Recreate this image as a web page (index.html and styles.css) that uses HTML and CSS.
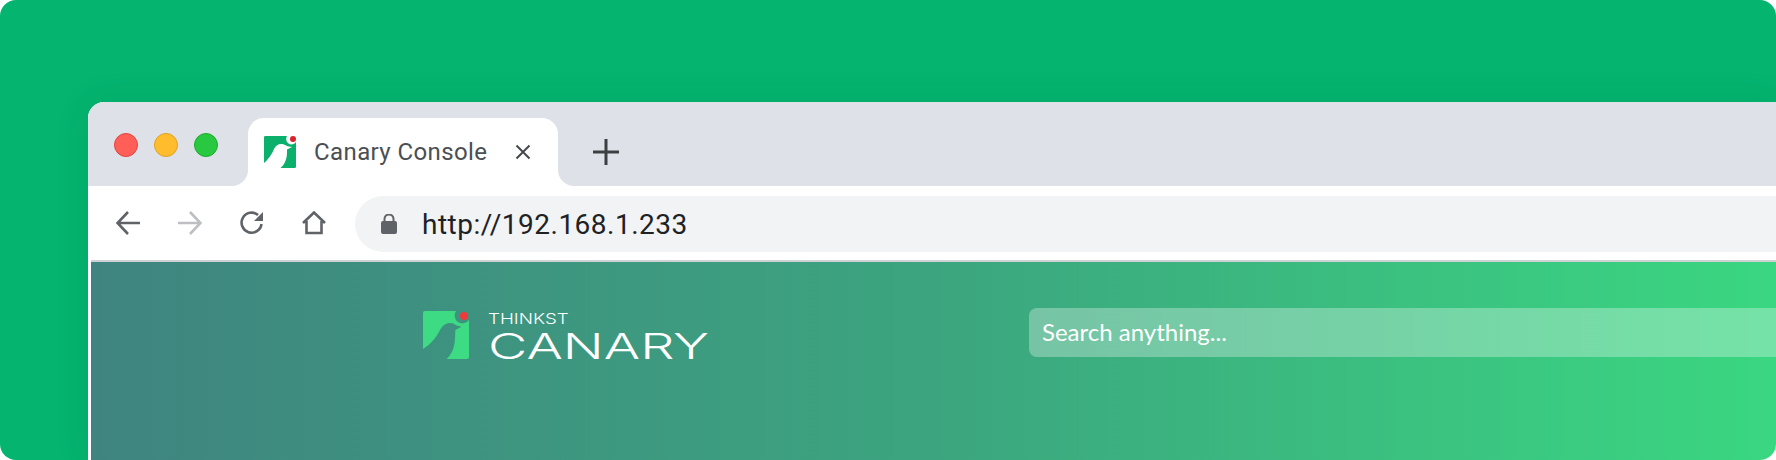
FILE: index.html
```html
<!DOCTYPE html>
<html lang="en">
<head>
    <meta charset="UTF-8">
    <title>Canary Console</title>
    <link rel="stylesheet" href="styles.css">
</head>
<body>
    <div class="scene">
        <div class="window">
            <div class="tabstrip">
                <div class="lights">
                    <span class="light red"></span>
                    <span class="light yellow"></span>
                    <span class="light green"></span>
                </div>
                <div class="tabslot">
                    <div class="tab">
                        <svg class="favicon" viewBox="0 0 32 32">
                            <path class="favicon-bg" d="M1.400 0H23A4.900 4.900 0 0 0 32 6V30.700A1.400 1.300 0 0 1 30.600 32H16.500C18 30.500 20 28.500 21 26C23 22 23 18 23 13.500L28 11L23.500 10.300C22 9.300 20 8.300 18 8C15 7.500 12 9 10 13C8 18 4 24 0 27V1.300A1.400 1.300 0 0 1 1.400 0Z"/>
                            <circle class="favicon-dot" cx="29" cy="3" r="3"/>
                        </svg>
                        <span class="tab-title">Canary Console</span>
                        <svg class="tab-close" viewBox="0 0 16 16"><path d="M1.500 1.500L14.500 14.500M14.500 1.500L1.500 14.500"/></svg>
                    </div>
                </div>
                <div class="strip-rest">
                    <svg class="newtab" viewBox="0 0 26 26"><path d="M13 0V26M0 13H26"/></svg>
                </div>
            </div>
            <div class="toolbar">
                <svg class="navicon" viewBox="0 0 24 24"><path d="M24 12H2M12 1L1.500 12L12 23"/></svg>
                <svg class="navicon off" viewBox="0 0 24 24"><path d="M0 12H22M12 1L22.500 12L12 23"/></svg>
                <svg class="navicon" viewBox="0 0 24 24"><path d="M21.500 13A10 10 0 1 1 18 4"/><path class="fill" d="M23 1V10H14Z"/></svg>
                <svg class="navicon" viewBox="0 0 24 24"><path d="M1 12L12 1.500L23 12M4.500 10V22H19.500V10"/></svg>
                <div class="address">
                    <svg class="lock" viewBox="0 0 16 20"><path class="lock-body" d="M2 7H14A2 2 0 0 1 16 9V18A2 2 0 0 1 14 20H2A2 2 0 0 1 0 18V9A2 2 0 0 1 2 7Z"/><path class="lock-bow" d="M3.500 8V5A4.500 4.500 0 0 1 12.500 5V8"/></svg>
                    <span class="url">http://192.168.1.233</span>
                </div>
            </div>
            <div class="content">
                <div class="logo">
                    <svg class="logo-mark" viewBox="0 0 46 48">
                        <path class="logo-bg" d="M2 0H33A7 7 0 0 0 46 9V46A2 2 0 0 1 44 48H23.500C27 45 30 40 31 35C32.500 29 32 24 32.300 19L38.500 15.700L33.500 14.500C31.500 12.800 29.500 12 27 12C23 12 19.500 14.500 17 19C13 27 7 34 0 38V2A2 2 0 0 1 2 0Z"/>
                        <circle class="logo-dot" cx="41" cy="5" r="4"/>
                    </svg>
                    <div class="wordmark">
                        <span class="thinkst">THINKST</span>
                        <span class="canary">CANARY</span>
                    </div>
                </div>
                <div class="search">Search anything...</div>
            </div>
        </div>
    </div>
</body>
</html>
```

FILE: styles.css
```css
html, body {
    margin: 0;
    background-color: #fff;
}

.scene {
    box-sizing: border-box;
    width: 1776px;
    height: 460px;
    padding: 102px 0 0 88px;
    overflow: hidden;
    border-radius: 16px;
    background-color: #04b46f;
}

.window {
    height: 100%;
    display: flex;
    flex-direction: column;
    overflow: hidden;
    border-radius: 16px 0 0 0;
    background-color: #fff;
    box-shadow: 0 0 36px rgba(0, 60, 30, 0.09);
}

.tabstrip {
    display: flex;
    height: 84px;
    flex-shrink: 0;
}

.lights {
    width: 160px;
    display: flex;
    gap: 16px;
    padding: 31px 0 0 26px;
    box-sizing: border-box;
    background-color: #dee1e8;
    border-radius: 0 0 16px 0;
}

.light {
    width: 24px;
    height: 24px;
    box-sizing: border-box;
    border-radius: 50%;
    border: 1px solid;
}

.red { background-color: #ff5f57; border-color: #e0443e; }
.yellow { background-color: #ffbd2e; border-color: #dea123; }
.green { background-color: #28c840; border-color: #1dad2b; }

.tabslot {
    width: 310px;
    padding-top: 16px;
    box-sizing: border-box;
    background-color: #dee1e8;
}

.tab {
    height: 68px;
    display: flex;
    align-items: flex-start;
    padding: 18px 0 0 16px;
    box-sizing: border-box;
    background-color: #fff;
    border-radius: 16px 16px 0 0;
}

.favicon {
    width: 32px;
    height: 32px;
    flex-shrink: 0;
}

.favicon-bg { fill: #0bb06c; }
.favicon-dot { fill: #d9232e; }

.tab-title {
    margin-left: 18px;
    font-family: Roboto, sans-serif;
    font-size: 24px;
    line-height: 32px;
    letter-spacing: 0.4px;
    color: #4b4e53;
    white-space: nowrap;
}

.tab-close {
    width: 16px;
    height: 16px;
    margin: 8px 0 0 28px;
    fill: none;
    stroke: #45484d;
    stroke-width: 2;
}

.strip-rest {
    flex: 1;
    padding: 37px 0 0 35px;
    box-sizing: border-box;
    background-color: #dee1e8;
    border-radius: 0 0 0 16px;
}

.newtab {
    display: block;
    width: 26px;
    height: 26px;
    fill: none;
    stroke: #3c4043;
    stroke-width: 3;
}

.toolbar {
    height: 74px;
    display: flex;
    align-items: center;
    gap: 38px;
    padding-left: 28px;
    box-sizing: border-box;
    flex-shrink: 0;
}

.navicon {
    width: 24px;
    height: 24px;
    flex-shrink: 0;
    fill: none;
    stroke: #5f6368;
    stroke-width: 2.600;
}

.navicon .fill {
    fill: #5f6368;
    stroke: none;
}

.navicon.off {
    stroke: #bdbfc2;
}

.address {
    flex: 1;
    height: 56px;
    margin: 2px 0 0 -9px;
    display: flex;
    align-items: center;
    padding-left: 26px;
    border-radius: 28px 0 0 28px;
    background-color: #f1f3f4;
}

.lock {
    width: 16px;
    height: 20px;
}

.lock-body { fill: #5f6368; }

.lock-bow {
    fill: none;
    stroke: #5f6368;
    stroke-width: 2;
}

.url {
    margin-left: 25px;
    font-family: Roboto, sans-serif;
    font-size: 28px;
    letter-spacing: 0.5px;
    color: #202124;
}

.content {
    flex: 1;
    margin-left: 3px;
    padding-top: 46px;
    display: flex;
    align-items: flex-start;
    border-top: 2px solid #cfd2d4;
    border-radius: 0 0 16px 0;
    background: linear-gradient(90deg, #3f8480 0%, #3ca57f 50%, #3ad781 100%);
    overflow: hidden;
}

.logo {
    display: flex;
    margin: 3px 0 0 332px;
    width: 606px;
    flex-shrink: 0;
    gap: 19px;
}

.logo-mark {
    width: 46px;
    height: 48px;
    flex-shrink: 0;
}

.logo-bg { fill: #3ddc84; }
.logo-dot { fill: #ef3b3b; }

.wordmark {
    display: flex;
    flex-direction: column;
    color: #fff;
    font-family: Inter, sans-serif;
}

.thinkst {
    font-size: 15px;
    line-height: 15px;
    font-weight: 300;
    transform: scaleX(1.25);
    transform-origin: left;
}

.canary {
    margin-top: 2px;
    font-size: 36px;
    line-height: 36px;
    font-weight: 300;
    transform: scaleX(1.5);
    transform-origin: left;
}

.search {
    flex: 1;
    height: 49px;
    padding-left: 13px;
    border-radius: 8px 0 0 8px;
    background-color: rgba(255, 255, 255, 0.3);
    font-family: Lato, sans-serif;
    font-size: 24px;
    line-height: 47px;
    color: #fff;
}
```
